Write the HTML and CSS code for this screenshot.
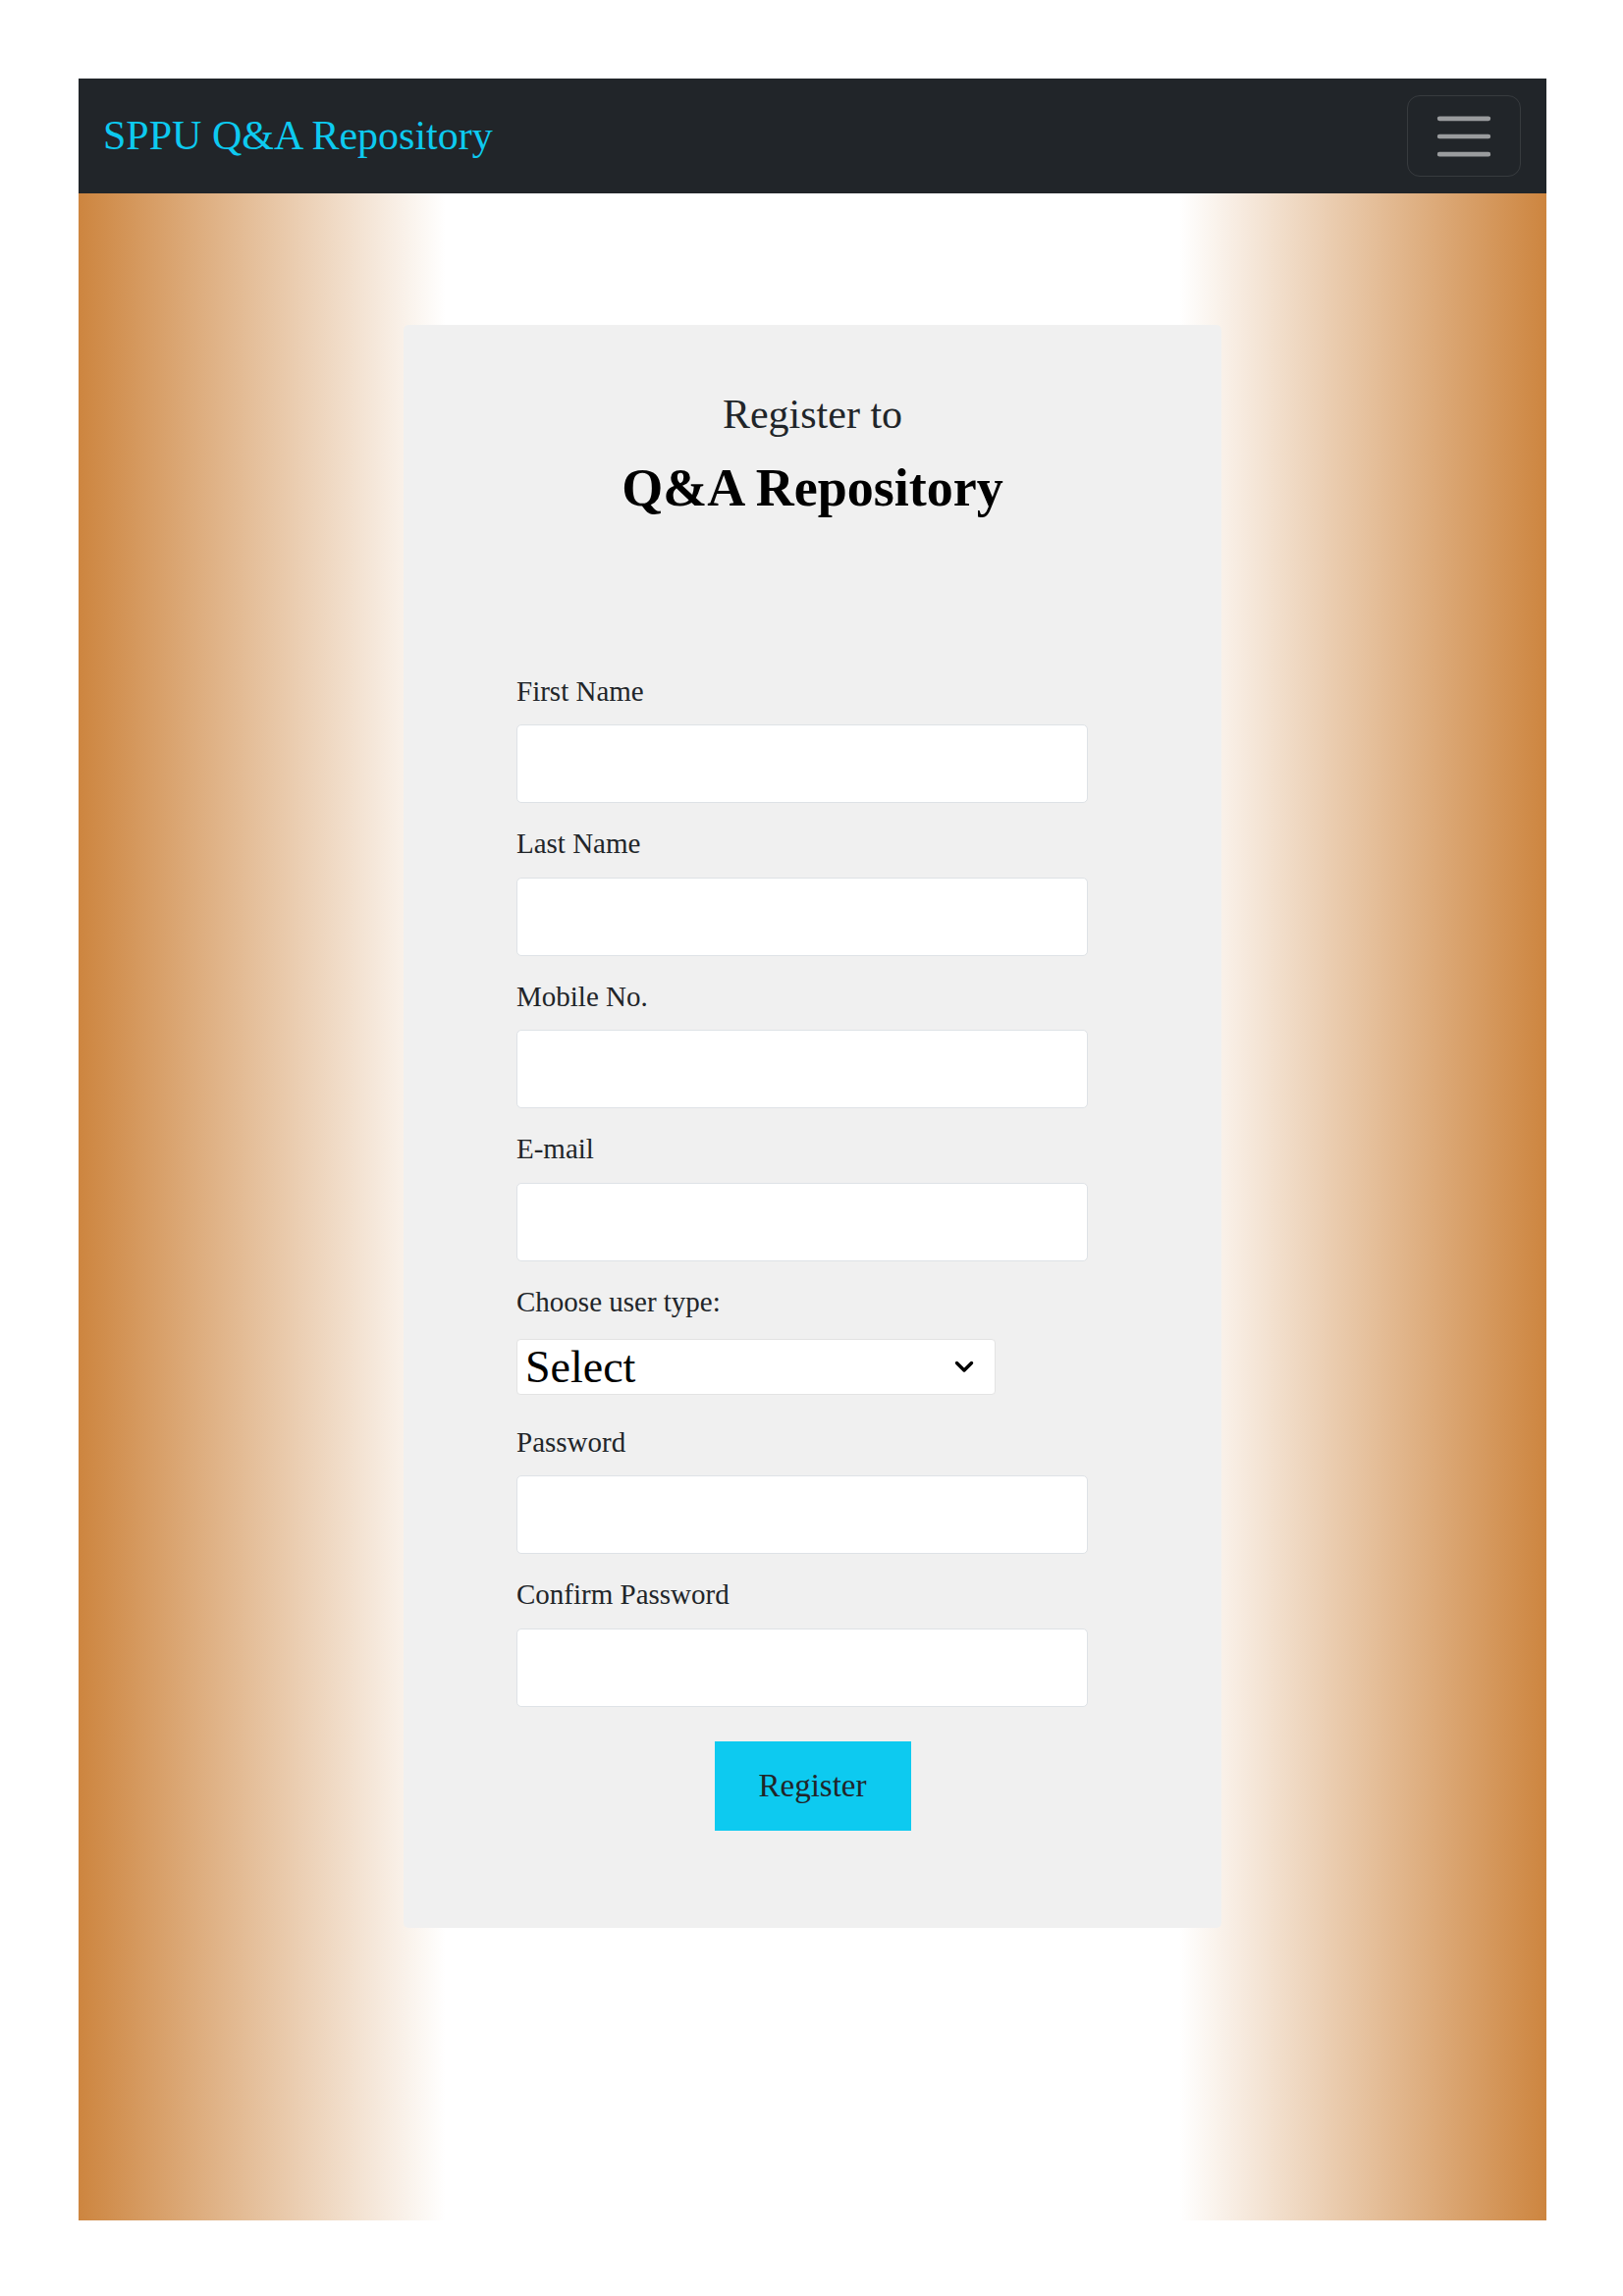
FILE: index.html
```html
<html>

<head>
  <meta name="viewport" content="width=device-width, initial-scale=1.0">
  <link rel="stylesheet" href="styles.css">
</head>

<body>
  <nav class="navbar">
    <a class="brand" href="#">SPPU Q&amp;A Repository</a>
    <button class="toggler" type="button">
      <svg viewBox="0 0 30 30">
        <path d="M4 7h22M4 15h22M4 23h22" stroke="rgba(255,255,255,0.55)" stroke-width="2" stroke-linecap="round" />
      </svg>
    </button>
  </nav>

  <div class="page">
    <div class="card">
      <h5 class="title_small">Register to</h5>
      <h2 class="title">Q&amp;A Repository</h2>

      <form class="reg_form">
        <div class="fields">
          <label for="fname">First Name</label>
          <input type="text" class="field" id="fname">

          <label for="lname">Last Name</label>
          <input type="text" class="field" id="lname">

          <label for="mobile">Mobile No.</label>
          <input type="text" class="field" id="mobile">

          <label for="email">E-mail</label>
          <input type="email" class="field" id="email">

          <div class="select_group">
            <label for="utype">Choose user type:</label>
            <div class="select_wrap">
              <select id="utype">
                <option>Select</option>
                <option>Student</option>
                <option>Teacher</option>
              </select>
              <svg class="chevron" viewBox="0 0 20 13">
                <polyline points="2.5,2.5 10,10 17.5,2.5" fill="none" stroke="#000" stroke-width="3.4" stroke-linecap="round" stroke-linejoin="round" />
              </svg>
            </div>
          </div>

          <label for="pass">Password</label>
          <input type="password" class="field" id="pass">

          <label for="cpass">Confirm Password</label>
          <input type="password" class="field" id="cpass">
        </div>

        <div class="btn_row">
          <button class="btn_register" type="submit">Register</button>
        </div>
      </form>
    </div>
  </div>
</body>

</html>
```

FILE: styles.css
```css
body {
  margin: 80px 78px 0 80px;
  font-family: "Liberation Serif", "Times New Roman", serif;
  color: #212529;
}

.navbar {
  display: flex;
  justify-content: space-between;
  align-items: center;
  height: 117px;
  padding: 0 26px 0 25px;
  box-sizing: border-box;
  background-color: #212529;
}

.brand {
  font-size: 42px;
  line-height: 117px;
  color: #0dcaf0;
  text-decoration: none;
}

.toggler {
  display: flex;
  align-items: center;
  justify-content: center;
  width: 116px;
  height: 83px;
  padding: 0;
  background: transparent;
  border: 1px solid rgba(255, 255, 255, 0.1);
  border-radius: 13px;
}

.toggler svg {
  width: 68px;
  height: 68px;
}

.page {
  padding: 134px 0 298px;
  background: linear-gradient(to right, #cd853f, #fff 25%, #fff 75%, #cd853f);
}

.card {
  width: 833px;
  margin: 0 auto;
  padding: 66px 0 99px;
  box-sizing: border-box;
  background-color: #f0f0f0;
  border-radius: 5px;
}

.title_small {
  margin: 0;
  font-size: 42px;
  font-weight: normal;
  line-height: 50px;
  text-align: center;
}

.title {
  margin: 18px 0 0;
  font-size: 54px;
  font-weight: bold;
  line-height: 64px;
  text-align: center;
  color: #000;
}

.reg_form {
  margin: 153.5px 0 0;
}

.fields {
  width: 582px;
  margin-left: 115px;
}

label {
  display: block;
  font-size: 29px;
  line-height: 43.5px;
  margin-bottom: 12px;
}

.field {
  display: block;
  width: 100%;
  height: 80px;
  margin: 0 0 20px;
  padding: 0 20px;
  box-sizing: border-box;
  font: inherit;
  background-color: #fff;
  border: 1px solid #dee2e6;
  border-radius: 5px;
}

.select_group {
  margin-top: 2px;
  margin-bottom: 26.5px;
}

.select_group label {
  margin-bottom: 16px;
}

.select_wrap {
  position: relative;
  width: 488px;
}

.select_wrap select {
  display: block;
  width: 100%;
  height: 57px;
  padding: 0 8px;
  box-sizing: border-box;
  font-family: "Liberation Serif", "Times New Roman", serif;
  font-size: 46px;
  line-height: 55px;
  color: #000;
  background-color: #fff;
  border: 1px solid #e3e3e3;
  border-radius: 4px;
  -webkit-appearance: none;
  appearance: none;
}

.chevron {
  position: absolute;
  right: 22px;
  top: 22px;
  width: 20px;
  height: 13px;
  pointer-events: none;
}

/* margin collapses with the last field's 20px */
.btn_row {
  margin-top: 35px;
  text-align: center;
}

.btn_register {
  width: 200px;
  height: 91px;
  padding: 0;
  font-family: "Liberation Serif", "Times New Roman", serif;
  font-size: 33px;
  line-height: 91px;
  color: #212529;
  background-color: #0dcaf0;
  border: none;
  cursor: pointer;
}
```
